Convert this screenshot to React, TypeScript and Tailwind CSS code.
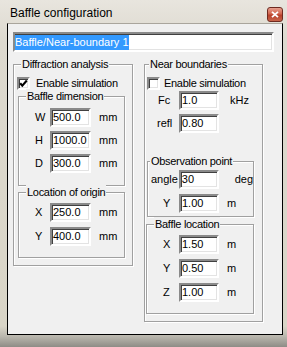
import React from "react";

const sunken =
  "border-2 border-t-[#8a8a8a] border-l-[#8a8a8a] border-b-white border-r-white shadow-[inset_1px_1px_0_#404040,inset_-1px_-1px_0_#e3e3e3] bg-white";

function Field({ value, w = "w-[41px]" }: { value: string; w?: string }) {
  return (
    <div className={`${sunken} ${w} h-[19px] pl-[1px] text-[11px] leading-[15px] text-black`}>
      {value}
    </div>
  );
}

type RowProps = {
  label: string;
  value: string;
  unit: string;
  labelClass: string;
  unitClass: string;
  fieldW?: string;
  mt?: string;
};

function Row({ label, value, unit, labelClass, unitClass, fieldW, mt = "" }: RowProps) {
  return (
    <div className={`flex h-[19px] items-center ${mt}`}>
      <span className={`whitespace-nowrap ${labelClass}`}>{label}</span>
      <Field value={value} w={fieldW} />
      <span className={unitClass}>{unit}</span>
    </div>
  );
}

function Group({
  title,
  legendLeft,
  className,
  children,
}: {
  title: string;
  legendLeft: string;
  className: string;
  children?: React.ReactNode;
}) {
  return (
    <div
      className={`relative border border-[#a0a0a0] shadow-[inset_1px_1px_0_#fff,1px_1px_0_#fff] ${className}`}
    >
      <span
        className={`absolute top-[-8px] ${legendLeft} bg-[#f0f0f0] px-[1px] text-[11px] leading-[14px] tracking-[-0.3px] whitespace-nowrap`}
      >
        {title}
      </span>
      {children}
    </div>
  );
}

function Checkbox({ checked }: { checked: boolean }) {
  return (
    <div className={`${sunken} flex h-[13px] w-[13px] shrink-0 items-center justify-center`}>
      {checked ? (
        <svg width="9" height="9" viewBox="0 0 9 9">
          <polyline points="1.2,4.2 3.3,6.6 7.8,1.5" fill="none" stroke="#000" strokeWidth="2.1" />
        </svg>
      ) : null}
    </div>
  );
}

export default function App() {
  return (
    <div className="flex h-[347px] w-[287px] flex-col bg-[linear-gradient(to_bottom,#e8e5de,#ddd9cf_12%,#d9d5c7_94%,#b9b6ad_97%,#8e8c86)] font-['Liberation_Sans',Arial,sans-serif] text-black">
      {/* title bar */}
      <div className="flex h-[23px] shrink-0 items-start justify-between">
        <span className="ml-[10px] mt-[5px] text-[12px] leading-[16px]">Baffle configuration</span>
        <div className="mr-[4px] mt-[7px] flex h-[15px] w-[16px] items-center justify-center rounded-[3px] border border-[#6e2a20] bg-[linear-gradient(to_bottom,#e8a08f,#d0634c_45%,#b7402a_55%,#c8644a)]">
          <svg width="8" height="7" viewBox="0 0 8 7">
            <path d="M1 0.8 L7 6.2 M7 0.8 L1 6.2" stroke="#fff" strokeWidth="1.8" />
          </svg>
        </div>
      </div>

      {/* client area */}
      <div className="ml-[7px] h-[312px] w-[276px] border border-t-[#a9a59c] border-l-black border-r-black border-b-black bg-[#f0f0f0]">
        <div className={`${sunken} ml-[5px] mt-[8px] flex h-[20px] w-[261px] items-center text-[11px]`}>
          <span className="bg-[#3399ff] leading-[15px] text-white">Baffle/Near-boundary 1</span>
        </div>

        <div className="ml-[5px] mt-[12px] flex items-start gap-[11px]">
          {/* left column */}
          <Group title="Diffraction analysis" legendLeft="left-[7px]" className="h-[202px] w-[120px]">
            <div className="ml-[3px] mt-[12px] flex items-center gap-[6px] text-[11px]">
              <Checkbox checked />
              <span className="leading-[13px] tracking-[-0.3px]">Enable simulation</span>
            </div>
            <Group title="Baffle dimension" legendLeft="left-[7px]" className="ml-[4px] mt-[6px] h-[90px] w-[107px]">
              <div className="pt-[11px] text-[11px]">
                <Row label="W" value="500.0" unit="mm" labelClass="w-[31px] pl-[16px]" unitClass="ml-[8px]" />
                <Row label="H" value="1000.0" unit="mm" labelClass="w-[31px] pl-[16px]" unitClass="ml-[8px]" mt="mt-[4px]" />
                <Row label="D" value="300.0" unit="mm" labelClass="w-[31px] pl-[16px]" unitClass="ml-[8px]" mt="mt-[4px]" />
              </div>
            </Group>
            <Group title="Location of origin" legendLeft="left-[7px]" className="ml-[4px] mt-[6px] h-[66px] w-[107px]">
              <div className="pt-[10px] text-[11px]">
                <Row label="X" value="250.0" unit="mm" labelClass="w-[31px] pl-[16px]" unitClass="ml-[8px]" />
                <Row label="Y" value="400.0" unit="mm" labelClass="w-[31px] pl-[16px]" unitClass="ml-[8px]" mt="mt-[5px]" />
              </div>
            </Group>
          </Group>

          {/* right column */}
          <Group title="Near boundaries" legendLeft="left-[4px]" className="h-[258px] w-[119px]">
            <div className="ml-[2px] mt-[12px] flex items-center gap-[4px] text-[11px]">
              <Checkbox checked={false} />
              <span className="leading-[13px] tracking-[-0.3px]">Enable simulation</span>
            </div>
            <div className="mt-[1px] text-[11px]">
              <Row label="Fc" value="1.0" unit="kHz" labelClass="w-[34px] pl-[13px]" unitClass="ml-[11px]" fieldW="w-[40px]" />
              <Row label="refl" value="0.80" unit="" labelClass="w-[34px] pl-[12px]" unitClass="" fieldW="w-[40px]" mt="mt-[4px]" />
            </div>
            <Group title="Observation point" legendLeft="left-[2px]" className="ml-[2px] mt-[28px] h-[56px] w-[107px]">
              <div className="pt-[8px] text-[11px]">
                <Row label="angle" value="30" unit="deg" labelClass="w-[31px] pr-[1px] text-right" unitClass="ml-[16px]" fieldW="w-[40px]" />
                <Row label="Y" value="1.00" unit="m" labelClass="w-[31px] pl-[15px]" unitClass="ml-[8px]" fieldW="w-[40px]" mt="mt-[5px]" />
              </div>
            </Group>
            <Group title="Baffle location" legendLeft="left-[7px]" className="ml-[1px] mt-[7px] h-[90px] w-[108px]">
              <div className="pt-[10px] text-[11px]">
                <Row label="X" value="1.50" unit="m" labelClass="w-[32px] pl-[16px]" unitClass="ml-[8px]" fieldW="w-[40px]" />
                <Row label="Y" value="0.50" unit="m" labelClass="w-[32px] pl-[16px]" unitClass="ml-[8px]" fieldW="w-[40px]" mt="mt-[5px]" />
                <Row label="Z" value="1.00" unit="m" labelClass="w-[32px] pl-[16px]" unitClass="ml-[8px]" fieldW="w-[40px]" mt="mt-[5px]" />
              </div>
            </Group>
          </Group>
        </div>
      </div>
    </div>
  );
}
